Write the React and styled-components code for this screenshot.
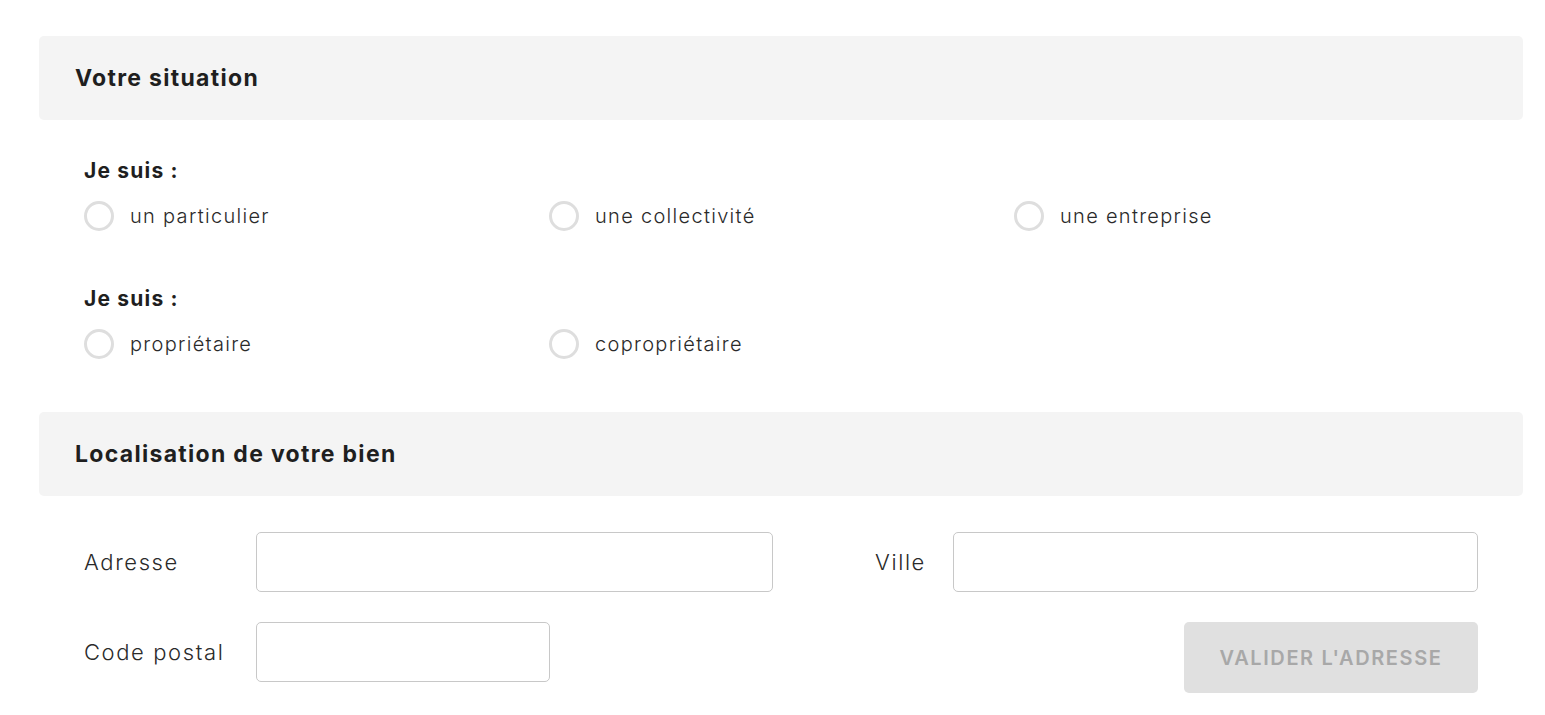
import styled, { createGlobalStyle } from 'styled-components';

const GlobalStyle = createGlobalStyle`
  body {
    margin: 0;
    background: #ffffff;
    font-family: Inter, "Noto Sans", sans-serif;
    color: #222222;
  }
`

const Page = styled.div`
  padding: 36px 22px 0 39px;
`

const SectionHeader = styled.div`
  height: 84px;
  display: flex;
  align-items: center;
  padding-left: 36px;
  background: #f4f4f4;
  border-radius: 5px;
`

const SectionTitle = styled.h2`
  margin: 0;
  font-size: 23px;
  font-weight: 700;
  letter-spacing: 1.3px;
  color: #1f1f1f;
`

const SectionBody = styled.div`
  padding: ${(props) => props.$pad};
`

const Group = styled.div`
  margin-bottom: ${(props) => props.$last ? '53px' : '56px'};
`

const GroupLabel = styled.div`
  font-size: 21px;
  font-weight: 700;
  letter-spacing: 1.2px;
  line-height: 24px;
  color: #1f1f1f;
  margin-bottom: 18px;
`

const RadioRow = styled.div`
  display: grid;
  grid-template-columns: repeat(3, 465px);
`

const RadioOption = styled.label`
  display: flex;
  align-items: center;
  gap: 16px;
  font-size: 20px;
  font-weight: 300;
  letter-spacing: 1.3px;
  color: #2a2a2a;
  cursor: pointer;
`

const RadioCircle = styled.span`
  width: 30px;
  height: 30px;
  box-sizing: border-box;
  border: 3px solid #dedede;
  border-radius: 50%;
  background: #ffffff;
`

const FormRow = styled.div`
  display: flex;
  align-items: flex-start;
  margin-bottom: ${(props) => props.$gap || '0'};
`

const FieldLabel = styled.label`
  width: ${(props) => props.$w};
  margin-left: ${(props) => props.$ml || '0'};
  height: 60px;
  display: flex;
  align-items: center;
  font-size: 22px;
  font-weight: 300;
  letter-spacing: 1.6px;
  color: #2a2a2a;
`

const TextInput = styled.input`
  width: ${(props) => props.$w};
  height: 60px;
  box-sizing: border-box;
  border: 1px solid #c8c8c8;
  border-radius: 5px;
  padding: 0 14px;
  font-size: 18px;
  font-family: inherit;
  outline: none;
`

const SubmitButton = styled.button`
  margin-left: auto;
  width: 294px;
  height: 71px;
  border: none;
  border-radius: 5px;
  background: #e0e0e0;
  color: #a8a8a8;
  font-family: inherit;
  font-size: 20px;
  font-weight: 600;
  letter-spacing: 1.6px;
  text-transform: uppercase;
`

const situations = [
  ['un particulier', 'une collectivité', 'une entreprise'],
  ['propriétaire', 'copropriétaire'],
]

const App = () => {
  return (
    <Page>
      <GlobalStyle />
      <SectionHeader>
        <SectionTitle>Votre situation</SectionTitle>
      </SectionHeader>
      <SectionBody $pad="39px 45px 0 45px">
        {situations.map((options, i) => (
          <Group key={i} $last={i === situations.length - 1}>
            <GroupLabel>Je suis :</GroupLabel>
            <RadioRow>
              {options.map((opt) => (
                <RadioOption key={opt}>
                  <RadioCircle />
                  {opt}
                </RadioOption>
              ))}
            </RadioRow>
          </Group>
        ))}
      </SectionBody>
      <SectionHeader>
        <SectionTitle>Localisation de votre bien</SectionTitle>
      </SectionHeader>
      <SectionBody $pad="36px 45px 0 45px">
        <FormRow $gap="30px">
          <FieldLabel $w="172px">Adresse</FieldLabel>
          <TextInput $w="517px" />
          <FieldLabel $w="78px" $ml="102px">Ville</FieldLabel>
          <TextInput $w="525px" />
        </FormRow>
        <FormRow>
          <FieldLabel $w="172px">Code postal</FieldLabel>
          <TextInput $w="294px" />
          <SubmitButton>Valider l'adresse</SubmitButton>
        </FormRow>
      </SectionBody>
    </Page>
  )
}

export default App;
